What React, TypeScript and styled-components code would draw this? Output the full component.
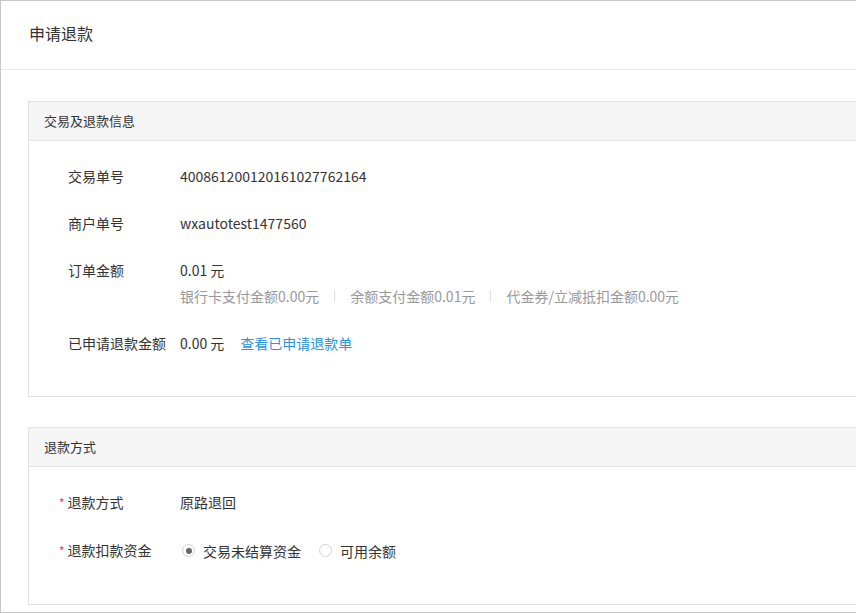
import React from "react";
import styled, { createGlobalStyle } from "styled-components";

const Global = createGlobalStyle`
  html, body { margin: 0; padding: 0; background: #fff; }
  body { font-family: "Noto Sans CJK SC", "Noto Sans", sans-serif; color: #333; overflow: hidden; }
`;

const Page = styled.div`
  width: 855px;
  height: 611px;
  border: 1px solid #c8c8c8;
  border-right: none;
  overflow: hidden;
`;

const Title = styled.div`
  height: 68px;
  border-bottom: 1px solid #e6e6e6;
  padding-left: 28px;
  font-size: 16px;
  line-height: 64px;
  color: #333;
`;

const Section = styled.div<{ $top: number; $h: number }>`
  margin: ${(p) => p.$top}px 0 0 27px;
  border: 1px solid #e3e3e3;
  border-right: none;
  height: ${(p) => p.$h}px;
`;

const SectionHeader = styled.div`
  height: 38px;
  background: #f5f5f5;
  border-bottom: 1px solid #e6e6e6;
  padding-left: 15px;
  font-size: 13px;
  line-height: 38px;
  color: #333;
`;

const Body = styled.div<{ $pt: number; $gap: number }>`
  padding: ${(p) => p.$pt}px 0 0 0;
  display: flex;
  flex-direction: column;
  gap: ${(p) => p.$gap}px;
`;

const Row = styled.div`
  display: flex;
  font-size: 14px;
  line-height: 20px;
`;

const Label = styled.div<{ $req?: boolean }>`
  width: 151px;
  padding-left: ${(p) => (p.$req ? 30 : 39)}px;
  box-sizing: border-box;
  color: #333;
  flex-shrink: 0;
`;

const Star = styled.span`
  color: #e64340;
  margin-right: 3px;
  font-size: 12px;
`;

const Value = styled.div`
  display: flex;
  flex-direction: column;
  gap: 6px;
`;

const Sub = styled.div`
  display: flex;
  align-items: center;
  font-size: 14px;
  color: #999;
`;

const Sep = styled.span`
  display: inline-block;
  width: 1px;
  height: 12px;
  background: #e0e0e0;
  margin: 0 15px;
`;

const Link = styled.span`
  color: #2b93e0;
  margin-left: 16px;
`;

const Radios = styled.div`
  display: flex;
  align-items: center;
`;

const Radio = styled.span<{ $on?: boolean }>`
  width: 13px;
  height: 13px;
  border: 1px solid #d2d2d2;
  border-radius: 50%;
  box-sizing: border-box;
  margin: 0 8px 0 2px;
  display: inline-flex;
  align-items: center;
  justify-content: center;
  &::after {
    content: "";
    width: 6px;
    height: 6px;
    border-radius: 50%;
    background: ${(p) => (p.$on ? "#666" : "transparent")};
  }
`;

const RadioText = styled.span`
  margin-right: 16px;
`;

export default function App() {
  return (
    <>
      <Global />
      <Page>
        <Title>申请退款</Title>
        <Section $top={31} $h={294}>
          <SectionHeader>交易及退款信息</SectionHeader>
          <Body $pt={25} $gap={27}>
            <Row>
              <Label>交易单号</Label>
              <Value>400861200120161027762164</Value>
            </Row>
            <Row>
              <Label>商户单号</Label>
              <Value>wxautotest1477560</Value>
            </Row>
            <Row>
              <Label>订单金额</Label>
              <Value>
                <div>0.01 元</div>
                <Sub>
                  银行卡支付金额0.00元<Sep />余额支付金额0.01元<Sep />代金券/立减抵扣金额0.00元
                </Sub>
              </Value>
            </Row>
            <Row>
              <Label>已申请退款金额</Label>
              <Value>
                <div>
                  0.00 元<Link>查看已申请退款单</Link>
                </div>
              </Value>
            </Row>
          </Body>
        </Section>
        <Section $top={30} $h={176}>
          <SectionHeader>退款方式</SectionHeader>
          <Body $pt={25} $gap={27}>
            <Row>
              <Label $req>
                <Star>*</Star>退款方式
              </Label>
              <Value>原路退回</Value>
            </Row>
            <Row>
              <Label $req>
                <Star>*</Star>退款扣款资金
              </Label>
              <Radios>
                <Radio $on />
                <RadioText>交易未结算资金</RadioText>
                <Radio />
                <RadioText>可用余额</RadioText>
              </Radios>
            </Row>
          </Body>
        </Section>
      </Page>
    </>
  );
}
